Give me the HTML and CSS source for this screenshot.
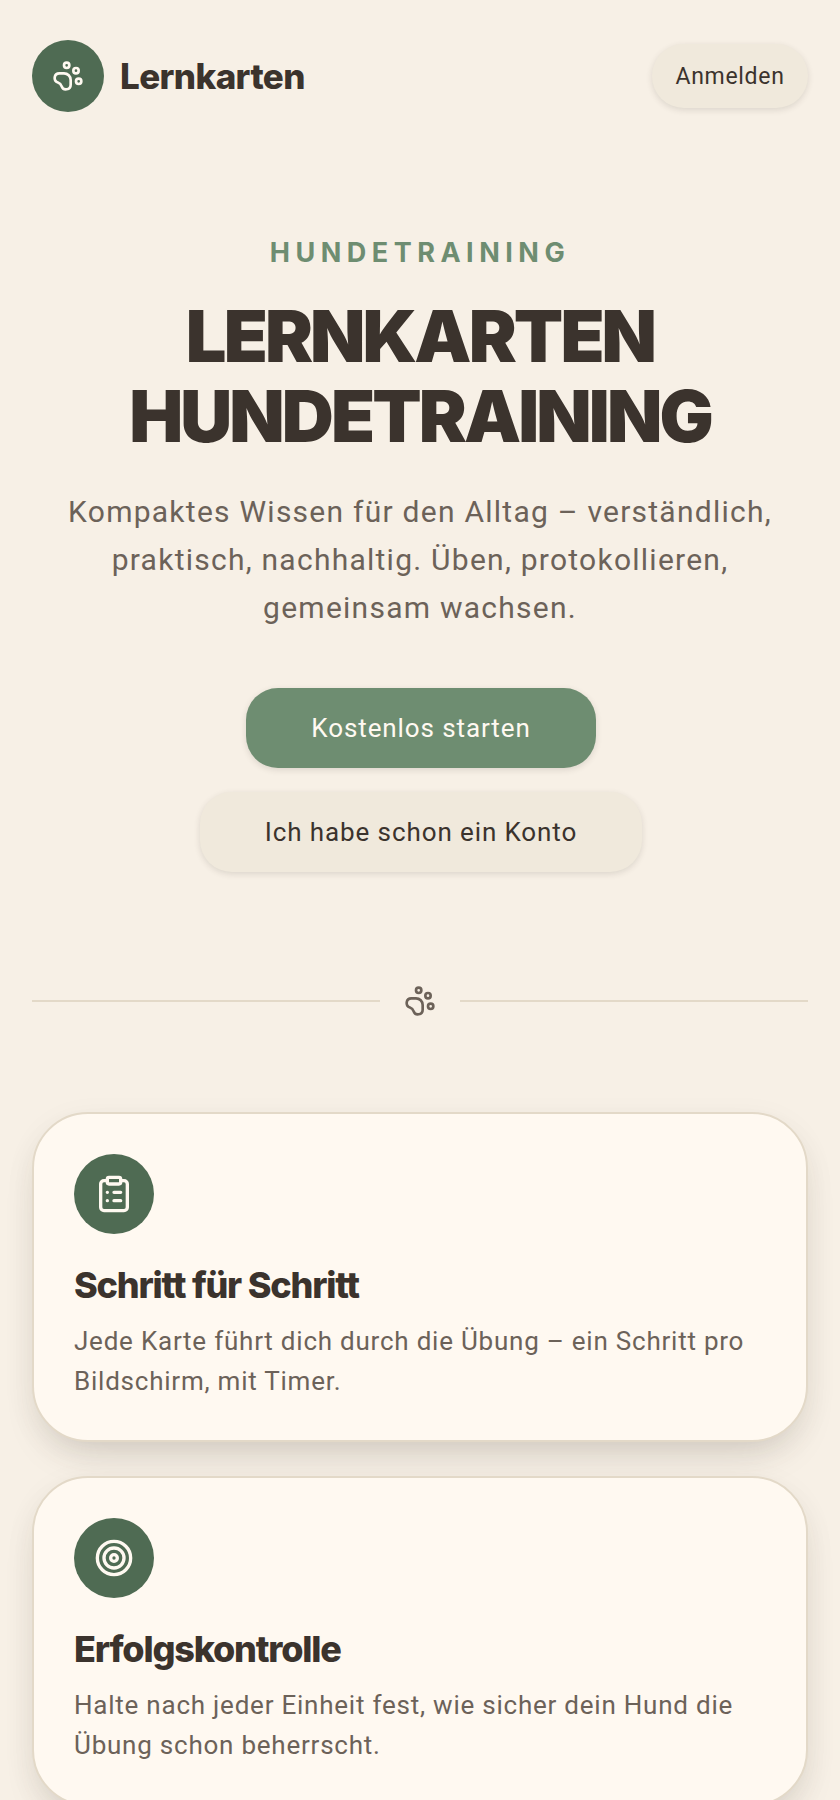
FILE: index.html
```html
<!DOCTYPE html>
<html lang="de">
<head>
  <title>Lernkarten Hundetraining</title>
  <link rel="stylesheet" href="styles.css">
</head>
<body>
  <header class="topbar">
    <div class="brand">
      <span class="icon-circle logo-circle">
        <svg class="paw" viewBox="0 0 24 24"><use href="#paw-icon"></use></svg>
      </span>
      <span class="brand-name">Lernkarten</span>
    </div>
    <button class="btn btn-small">Anmelden</button>
  </header>

  <section class="hero">
    <p class="eyebrow">HUNDETRAINING</p>
    <h1>LERNKARTEN HUNDETRAINING</h1>
    <p class="lead">Kompaktes Wissen für den Alltag – verständlich, praktisch, nachhaltig. Üben, protokollieren, gemeinsam wachsen.</p>
    <div class="hero-buttons">
      <button class="btn btn-primary">Kostenlos starten</button>
      <button class="btn btn-secondary">Ich habe schon ein Konto</button>
    </div>
  </section>

  <div class="divider">
    <span class="divider-line"></span>
    <svg class="divider-paw" viewBox="0 0 24 24"><use href="#paw-icon"></use></svg>
    <span class="divider-line"></span>
  </div>

  <section class="cards">
    <article class="card">
      <span class="icon-circle card-circle">
        <svg viewBox="0 0 24 24" fill="none" stroke="currentColor" stroke-width="2" stroke-linecap="round" stroke-linejoin="round">
          <rect x="8" y="2" width="8" height="4" rx="1"></rect>
          <path d="M16 4h2a2 2 0 0 1 2 2v14a2 2 0 0 1-2 2H6a2 2 0 0 1-2-2V6a2 2 0 0 1 2-2h2"></path>
          <path d="M12 11h4M12 16h4M8 11h.01M8 16h.01"></path>
        </svg>
      </span>
      <h2>Schritt für Schritt</h2>
      <p>Jede Karte führt dich durch die Übung – ein Schritt pro Bildschirm, mit Timer.</p>
    </article>
    <article class="card">
      <span class="icon-circle card-circle">
        <svg viewBox="0 0 24 24" fill="none" stroke="currentColor" stroke-width="2" stroke-linecap="round" stroke-linejoin="round">
          <circle cx="12" cy="12" r="10"></circle>
          <circle cx="12" cy="12" r="6"></circle>
          <circle cx="12" cy="12" r="2"></circle>
        </svg>
      </span>
      <h2>Erfolgskontrolle</h2>
      <p>Halte nach jeder Einheit fest, wie sicher dein Hund die Übung schon beherrscht.</p>
    </article>
  </section>

  <svg class="icon-defs" aria-hidden="true">
    <symbol id="paw-icon" viewBox="0 0 24 24">
      <g fill="none" stroke="currentColor" stroke-width="2" stroke-linecap="round" stroke-linejoin="round">
        <circle cx="11" cy="4" r="2"></circle>
        <circle cx="18" cy="8" r="2"></circle>
        <circle cx="20" cy="16" r="2"></circle>
        <path d="M9 10a5 5 0 0 1 5 5v3.5a3.5 3.5 0 0 1-6.84 1.045Q6.52 17.48 4.46 16.84A3.5 3.5 0 0 1 5.5 10Z"></path>
      </g>
    </symbol>
  </svg>
</body>
</html>
```

FILE: styles.css
```css
* {
  box-sizing: border-box;
}

html, body {
  height: 1800px;
  overflow: hidden;
}

body {
  margin: 0;
  padding: 40px 32px 0;
  background-color: #f7f0e6;
  color: #3b332d;
  font-family: Roboto, Arial, sans-serif;
}

.icon-defs {
  display: none;
}

/* top bar */
.topbar {
  display: flex;
  align-items: center;
  justify-content: space-between;
  height: 72px;
}

.brand {
  display: flex;
  align-items: center;
  gap: 16px;
}

.icon-circle {
  display: flex;
  align-items: center;
  justify-content: center;
  border-radius: 50%;
  background-color: #4f6b53;
  color: #fff9f1;
}

.logo-circle {
  width: 72px;
  height: 72px;
}

.paw {
  width: 32px;
  height: 32px;
}

.brand-name {
  font-family: Inter, Arial, sans-serif;
  font-size: 35px;
  font-weight: 800;
  letter-spacing: -0.6px;
}

/* buttons */
.btn {
  display: block;
  border: none;
  border-radius: 32px;
  font-family: Roboto, Arial, sans-serif;
}

.btn-small {
  width: 156px;
  height: 64px;
  background-color: #f0e9dc;
  color: #3b332d;
  font-size: 23px;
  letter-spacing: 0.7px;
  box-shadow: 0 2px 6px rgba(59, 51, 45, 0.14);
}

.btn-primary {
  width: 350px;
  height: 80px;
  background-color: #6e8d71;
  color: #fff9f1;
  font-size: 26px;
  letter-spacing: 0.9px;
  box-shadow: 0 2px 6px rgba(59, 51, 45, 0.14);
}

.btn-secondary {
  width: 442px;
  height: 80px;
  background-color: #f0e9dc;
  color: #3b332d;
  font-size: 26px;
  letter-spacing: 0.9px;
  box-shadow: 0 2px 6px rgba(59, 51, 45, 0.14);
}

/* hero */
.hero {
  padding-top: 123px;
  text-align: center;
}

.eyebrow {
  margin: 0;
  color: #6e8d71;
  font-family: Inter, Arial, sans-serif;
  font-size: 27px;
  font-weight: 700;
  line-height: 36px;
  letter-spacing: 5.5px;
}

h1 {
  width: 660px;
  margin: 25px auto 0;
  font-family: Inter, Arial, sans-serif;
  font-size: 72px;
  font-weight: 900;
  line-height: 80px;
  letter-spacing: -2.9px;
}

.lead {
  width: 740px;
  margin: 32px auto 0;
  color: #6c6259;
  font-size: 30px;
  line-height: 48px;
  letter-spacing: 1.25px;
}

.hero-buttons {
  display: flex;
  flex-direction: column;
  align-items: center;
  gap: 24px;
  margin-top: 56px;
  padding-left: 2px;
}

/* divider */
.divider {
  display: flex;
  align-items: center;
  gap: 24px;
  margin-top: 112px;
  height: 34px;
}

.divider-line {
  flex: 1;
  height: 2px;
  background-color: #e3d9c8;
}

.divider-paw {
  width: 32px;
  height: 32px;
  color: #6c6259;
}

/* cards */
.cards {
  display: flex;
  flex-direction: column;
  gap: 34px;
  margin-top: 94px;
}

.card {
  height: 330px;
  padding: 40px;
  background-color: #fff9f1;
  border: 2px solid #e3d9c8;
  border-radius: 56px;
  box-shadow: 0 20px 40px -16px rgba(59, 51, 45, 0.22), 0 8px 32px rgba(59, 51, 45, 0.05);
}

.card-circle {
  width: 80px;
  height: 80px;
}

.card-circle svg {
  width: 40px;
  height: 40px;
}

.card h2 {
  margin: 29px 0 0;
  font-family: Inter, Arial, sans-serif;
  font-size: 36px;
  font-weight: 800;
  line-height: 44px;
  letter-spacing: -1.2px;
}

.card p {
  margin: 14px 0 0;
  color: #6c6259;
  font-size: 26px;
  line-height: 40px;
  letter-spacing: 0.77px;
}
```
